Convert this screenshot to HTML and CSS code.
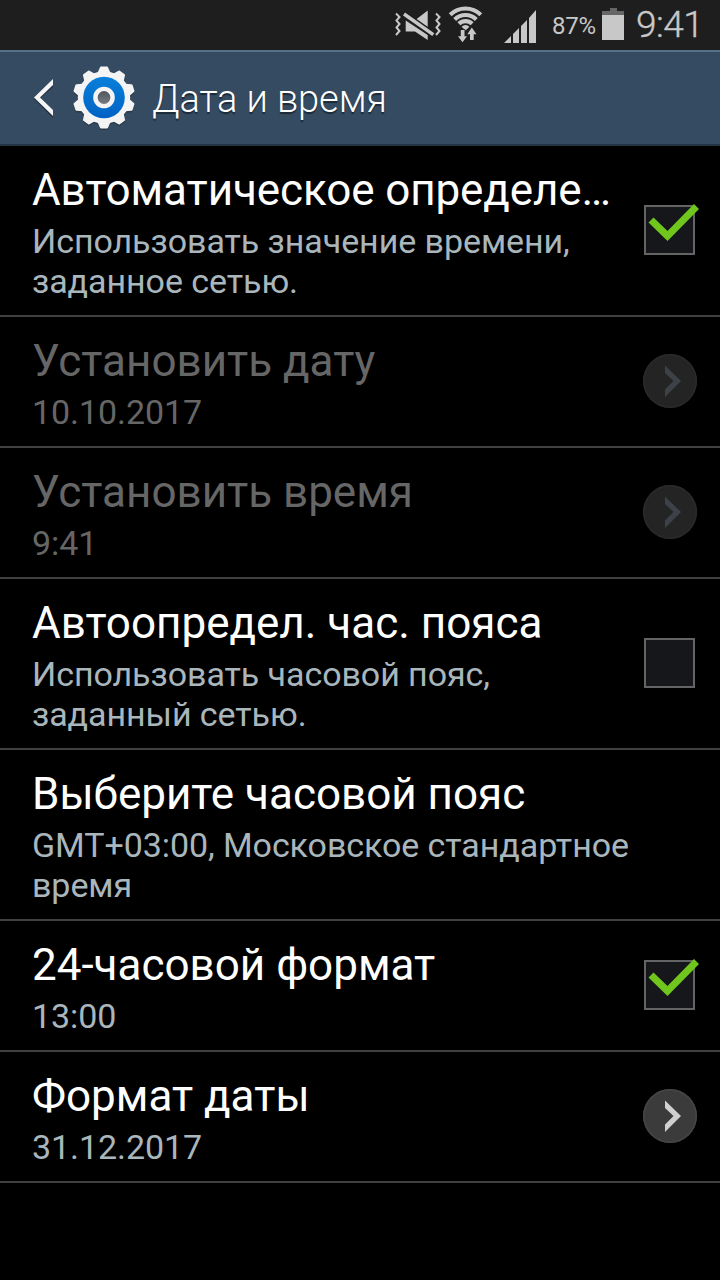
FILE: index.html
```html
<!DOCTYPE html>
<html lang="ru">
<head>
  <meta charset="UTF-8" />
  <meta name="viewport" content="width=device-width, initial-scale=1.0"/>
  <title>Дата и время</title>
  <link rel="stylesheet" href="styles.css">
</head>
<body>
  <!-- Status bar -->
  <div class="status-bar">
    <svg class="vibrate" width="48" height="30" viewBox="0 0 48 30">
      <path d="M3 3.500l3.500 3.500-3 3.500 3 3.500-3 3.500 3 3.500L3 25M43 3.500l3.500 3.500-3 3.500 3 3.500-3 3.500 3 3.500L43 25" fill="none" stroke="#c8c8c8" stroke-width="2"/>
      <path d="M23 9.500L34.700.5v17zM12.700 10.500L34.700 25v5L22 21.500h-9.300z" fill="#c8c8c8"/>
      <path d="M11 4l29.300 20.700" stroke="#1e1e1e" stroke-width="6.400"/>
      <path d="M11 4l29.300 20.700" stroke="#c8c8c8" stroke-width="3.400"/>
    </svg>
    <svg class="wifi" width="36" height="38" viewBox="0 0 36 38">
      <path d="M2.200 8.700a22 22 0 0 1 30.600 0M6.700 13.400a15.500 15.500 0 0 1 21.600 0M10.900 17.700a9.500 9.500 0 0 1 13.200 0" fill="none" stroke="#c8c8c8" stroke-width="4.200"/>
      <path d="M13.600 20.700a5.500 5.500 0 0 1 7.800 0l-3.900 3.800z" fill="#c8c8c8"/>
      <path d="M12.800 24h3.700v6.300h2.500l-4.500 6-4.500-6h2.800zM22 34h3.700v-5.700h2.800l-4.700-6.800-4.500 6.800H22z" fill="#c8c8c8" stroke="#1e1e1e" stroke-width="1.600" paint-order="stroke"/>
    </svg>
    <svg class="signal" width="33" height="33" viewBox="0 0 33 33">
      <path d="M0 33l7-7v7zM9 24l6-6v15H9zM17 16l6-6v23h-6zM25 8l7-8v33h-7z" fill="#c8c8c8"/>
    </svg>
    <span class="percent">87%</span>
    <svg class="battery" width="22" height="32" viewBox="0 0 22 32">
      <path d="M0 3h8V0h7v3h7v4H0z" fill="#666"/>
      <path d="M0 7h22v25H0z" fill="#c8c8c8"/>
    </svg>
    <span class="clock">9:41</span>
  </div>

  <!-- Action bar -->
  <div class="header">
    <svg class="back" width="22" height="40" viewBox="0 0 22 40">
      <path d="M20 3v6L6.500 21 20 34v6L1 21z" fill="#1f2f40"/>
      <path d="M20 1v6L7 19.500 20 32v6L1 19.500z" fill="#f5f5f5"/>
    </svg>
    <svg class="gear" width="64" height="64" viewBox="-32 -32 64 64">
      <defs>
        <linearGradient id="blue" x1="0" y1="0" x2="0" y2="1">
          <stop offset="0" stop-color="#087fda"/>
          <stop offset="1" stop-color="#0062c4"/>
        </linearGradient>
        <linearGradient id="hole" x1="0" y1="0" x2="0" y2="1">
          <stop offset="0" stop-color="#4a4f54"/>
          <stop offset="1" stop-color="#7c8288"/>
        </linearGradient>
        <path id="tooth" d="M-6.500-24.500L-4-30.200q.3-.8 1-.8h6q.7 0 1 .8l2.500 5.700z"/>
        <g id="wheel">
          <circle r="26.200"/>
          <use href="#tooth"/>
          <use href="#tooth" transform="rotate(36)"/>
          <use href="#tooth" transform="rotate(72)"/>
          <use href="#tooth" transform="rotate(108)"/>
          <use href="#tooth" transform="rotate(144)"/>
          <use href="#tooth" transform="rotate(180)"/>
          <use href="#tooth" transform="rotate(216)"/>
          <use href="#tooth" transform="rotate(252)"/>
          <use href="#tooth" transform="rotate(288)"/>
          <use href="#tooth" transform="rotate(324)"/>
        </g>
      </defs>
      <use href="#wheel" fill="#2b3a49" y="1"/>
      <use href="#wheel" fill="#f4f4f4" y="-.5"/>
      <circle cy="-.5" r="20.800" fill="url(#blue)"/>
      <circle cy="-.5" r="8.600" fill="url(#hole)" stroke="#f4f4f4" stroke-width="4.400"/>
    </svg>
    <h1 class="header-title">Дата и время</h1>
  </div>

  <!-- Settings list -->
  <ul class="list">
    <li class="item">
      <div class="item-text">
        <div class="title title-long">Автоматическое определе…</div>
        <div class="summary">Использовать значение времени,<br>заданное сетью.</div>
      </div>
      <div class="checkbox">
        <svg class="check" width="52" height="40" viewBox="0 0 52 40"><path d="M.5 20.500L5.500 15.500l14 13.500L46 2 51 7 19.500 39z" fill="#70c61d"/></svg>
      </div>
    </li>
    <li class="item disabled">
      <div class="item-text">
        <div class="title">Установить дату</div>
        <div class="summary">10.10.2017</div>
      </div>
      <div class="arrow">
        <svg width="54" height="54" viewBox="0 0 54 54"><path d="M22 11.500L38 27 22 43v-7.500l8.500-8.500-8.500-8z"/></svg>
      </div>
    </li>
    <li class="item disabled">
      <div class="item-text">
        <div class="title">Установить время</div>
        <div class="summary">9:41</div>
      </div>
      <div class="arrow">
        <svg width="54" height="54" viewBox="0 0 54 54"><path d="M22 11.500L38 27 22 43v-7.500l8.500-8.500-8.500-8z"/></svg>
      </div>
    </li>
    <li class="item">
      <div class="item-text">
        <div class="title">Автоопредел. час. пояса</div>
        <div class="summary">Использовать часовой пояс,<br>заданный сетью.</div>
      </div>
      <div class="checkbox"></div>
    </li>
    <li class="item">
      <div class="item-text">
        <div class="title">Выберите часовой пояс</div>
        <div class="summary">GMT+03:00, Московское стандартное<br>время</div>
      </div>
    </li>
    <li class="item">
      <div class="item-text">
        <div class="title">24-часовой формат</div>
        <div class="summary">13:00</div>
      </div>
      <div class="checkbox">
        <svg class="check" width="52" height="40" viewBox="0 0 52 40"><path d="M.5 20.500L5.500 15.500l14 13.500L46 2 51 7 19.500 39z" fill="#70c61d"/></svg>
      </div>
    </li>
    <li class="item">
      <div class="item-text">
        <div class="title">Формат даты</div>
        <div class="summary">31.12.2017</div>
      </div>
      <div class="arrow">
        <svg width="54" height="54" viewBox="0 0 54 54"><path d="M22 11.500L38 27 22 43v-7.500l8.500-8.500-8.500-8z"/></svg>
      </div>
    </li>
  </ul>
</body>
</html>
```
FILE: styles.css
```css
* {
  margin: 0;
  padding: 0;
  box-sizing: border-box;
}

body {
  font-family: Roboto, "Noto Sans", sans-serif;
  background-color: #000;
  color: #fff;
  height: 1280px;
  overflow: hidden;
}

.status-bar {
  display: flex;
  align-items: flex-start;
  height: 50px;
  padding-left: 393px;
  background-color: #1e1e1e;
  color: #c8c8c8;
  white-space: nowrap;
}

.vibrate {
  margin-top: 10px;
}

.wifi {
  margin: 6px 0 0 7px;
}

.signal {
  margin: 10px 0 0 20px;
}

.percent {
  margin: 10px 0 0 15px;
  width: 50px;
  font-size: 24px;
  letter-spacing: -0.3px;
  line-height: 32px;
}

.battery {
  margin-top: 8px;
}

.clock {
  margin: 4px 0 0 12px;
  font-size: 37px;
  font-weight: 300;
  letter-spacing: -0.5px;
  line-height: 42px;
  -webkit-text-stroke: 0.4px #c8c8c8;
}

.header {
  display: flex;
  align-items: center;
  height: 96px;
  padding-left: 33px;
  background-color: #344b61;
  border-top: 2px solid #56708a;
  border-bottom: 2px solid #233444;
}

.gear {
  margin-left: 17px;
}

.header-title {
  margin: 1px 0 0 16px;
  font-size: 38px;
  font-weight: 300;
  letter-spacing: -0.1px;
  line-height: 46px;
  text-shadow: 0 2px 1px #1b2a38;
}

.list {
  list-style: none;
}

.item {
  display: flex;
  align-items: center;
  justify-content: space-between;
  padding: 0 23px 0 32px;
  border-bottom: 2px solid #404040;
}

.item-text {
  flex: none;
  padding: 18px 0 14px;
  white-space: nowrap;
}

.title {
  font-size: 44px;
  line-height: 52px;
}

.title-long {
  letter-spacing: -0.1px;
}

.summary {
  margin-top: 5px;
  font-size: 34px;
  letter-spacing: -0.07px;
  line-height: 40px;
  color: #a9b6bc;
}

.disabled .title,
.disabled .summary {
  color: #666;
}

.checkbox {
  position: relative;
  width: 51px;
  height: 50px;
  margin: 0 2px 2px 0;
  background-color: #15171b;
  border: 2px solid #646464;
}

.check {
  position: absolute;
  left: 2px;
  top: -5px;
}

.arrow {
  width: 54px;
  height: 54px;
  margin-bottom: 2px;
  border-radius: 50%;
  background-color: #3b3b3b;
  box-shadow: inset 0 0 2px 1px #4c4c4c;
}

.arrow svg {
  display: block;
  fill: #d0d0d0;
}

.disabled .arrow {
  background-color: #242424;
  box-shadow: inset 0 0 2px 1px #2e2e2e;
}

.disabled .arrow svg {
  fill: #3c4248;
}
```
